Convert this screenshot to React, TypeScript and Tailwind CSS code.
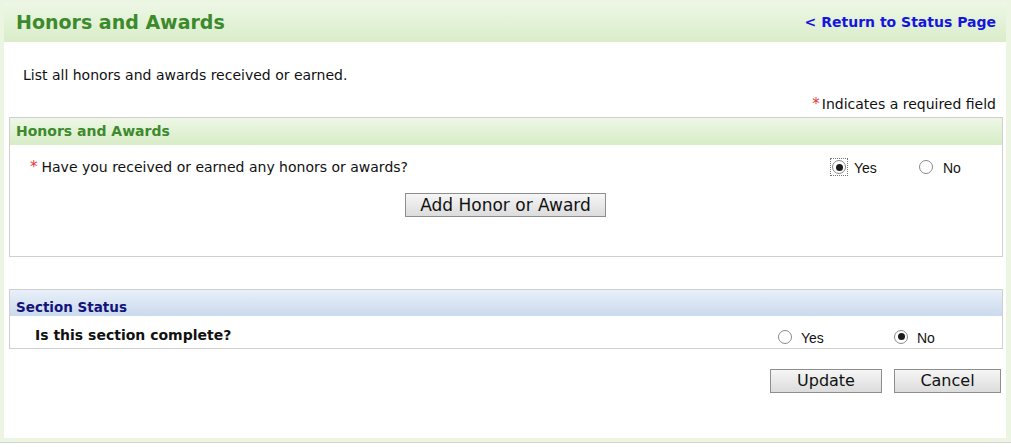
import React from 'react';

const Radio = ({ checked, focus }: { checked?: boolean; focus?: boolean }) => (
  <span className={`inline-flex items-center justify-center w-[16px] h-[16px] ${focus ? 'outline outline-1 outline-dotted outline-[#777]' : ''}`}>
    <span className="w-[14px] h-[14px] rounded-full border border-[#8a8a8a] bg-white flex items-center justify-center">
      {checked && <span className="w-[7px] h-[7px] rounded-full bg-[#1b1b1b]" />}
    </span>
  </span>
);

const Btn = ({ label, w, size }: { label: string; w: string; size: string }) => (
  <button className={`${w} ${size} h-[24px] border border-[#8e8e8e] bg-gradient-to-b from-[#f6f6f6] to-[#dcdcdc] leading-none text-[#111]`}>
    {label}
  </button>
);

export default function App() {
  return (
    <div className="w-[1011px] h-[447px] bg-white font-['DejaVu_Sans',Verdana,sans-serif] text-[#111]">
      <div className="h-[442px] border-l-[4px] border-r-[5px] border-b-[4px] border-t-[2px] border-[#ecf5e1] flex flex-col shadow-[0_1px_0_#d4d4d4]">
        {/* header */}
        <div className="h-[40px] bg-gradient-to-b from-[#eef7e6] to-[#d9edc9] flex items-center justify-between pl-[12px] pr-[10px]">
          <h1 className="text-[19px] font-bold text-[#3c8a2c]">Honors and Awards</h1>
          <a className="text-[14px] font-bold text-[#1515e0]">&lt; Return to Status Page</a>
        </div>

        <p className="text-[14px] pl-[19px] mt-[25px] leading-[17px]">List all honors and awards received or earned.</p>
        <p className="text-[14px] text-right pr-[10px] mt-[12px] leading-[17px]">
          <span className="text-[#e83838] text-[15px] mr-[2px]">*</span>Indicates a required field
        </p>

        {/* Honors box */}
        <div className="ml-[5px] mr-[3px] mt-[4px] h-[140px] border border-[#cfcfcf]">
          <div className="h-[27px] bg-gradient-to-b from-[#eef7e6] to-[#d7ecc7] flex items-center pl-[6px] text-[14px] font-bold text-[#3d8a2d]">
            Honors and Awards
          </div>
          <div className="flex items-center h-[40px] pt-[4px]">
            <div className="flex-1 pl-[20px] text-[14px]">
              <span className="text-[#e83838] text-[15px] mr-[4px]">*</span>Have you received or earned any honors or awards?
            </div>
            <div className="w-[171px] flex items-center font-['Liberation_Sans',Arial,sans-serif] text-[14px]">
              <div className="w-[87px] flex items-center gap-[7px]"><Radio checked focus /><span className="mt-[3px]">Yes</span></div>
              <div className="flex items-center gap-[9px]"><Radio /><span className="mt-[3px]">No</span></div>
            </div>
          </div>
          <div className="flex justify-center mt-[8px] pr-[1px]">
            <Btn label="Add Honor or Award" w="w-[201px]" size="text-[17px]" />
          </div>
        </div>

        {/* Section status */}
        <div className="ml-[5px] mr-[3px] mt-[32px] h-[60px] border border-[#cfcfcf]">
          <div className="h-[26px] bg-gradient-to-b from-[#e9f0f9] to-[#c9daed] flex items-end pb-[1px] pl-[6px] text-[13.5px] leading-[15px] font-bold text-[#13137a]">
            Section Status
          </div>
          <div className="flex items-start h-[32px] pt-[11px]">
            <div className="flex-1 pl-[25px] text-[14px] leading-[17px] font-bold">Is this section complete?</div>
            <div className="w-[225px] -mt-[3px] flex items-center font-['Liberation_Sans',Arial,sans-serif] text-[14px]">
              <div className="w-[116px] flex items-center gap-[8px]"><Radio /><span className="mt-[4px]">Yes</span></div>
              <div className="flex items-center gap-[8px]"><Radio checked /><span className="mt-[4px]">No</span></div>
            </div>
          </div>
        </div>

        <div className="flex justify-end gap-[12px] pr-[5px] mt-[20px]">
          <Btn label="Update" w="w-[112px]" size="text-[16px]" />
          <Btn label="Cancel" w="w-[107px]" size="text-[16px]" />
        </div>
      </div>
    </div>
  );
}
